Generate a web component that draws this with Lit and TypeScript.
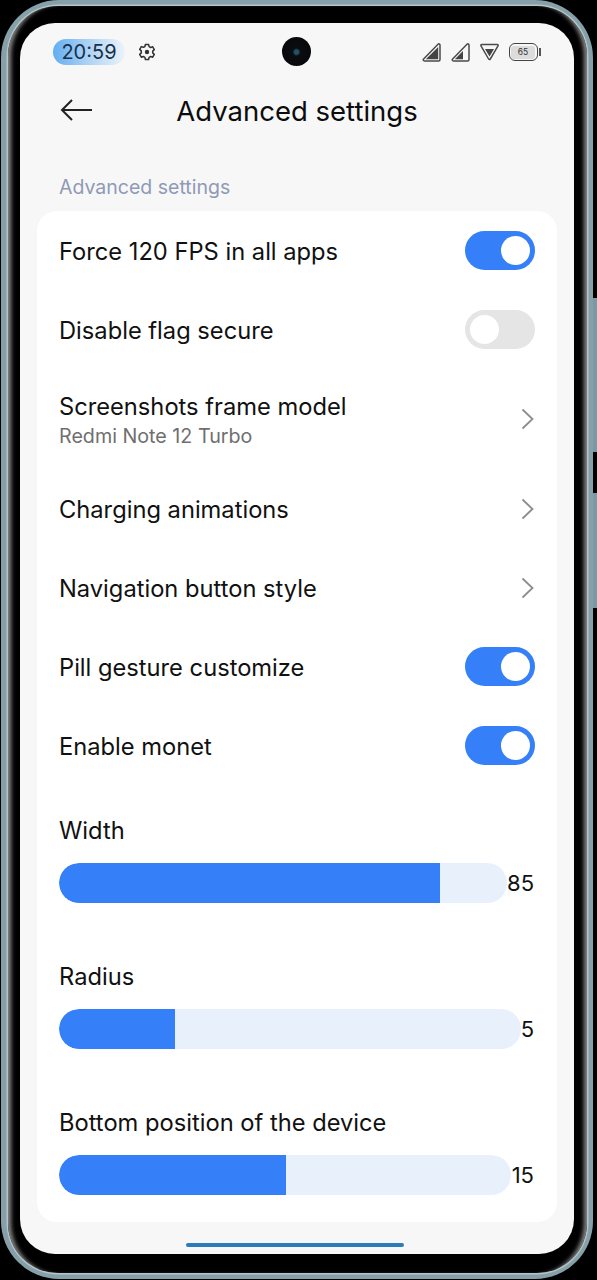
import { LitElement, html, css, svg } from "lit";
import { customElement } from "lit/decorators.js";

const chevron = html`<svg class="chev" width="13" height="22" viewBox="0 0 13 22"><path d="M1.500 1.500L11.500 11L1.500 20.500" fill="none" stroke="#8d8d8d" stroke-width="1.800"/></svg>`;

const signal = (fillPath: string) => svg`
  <path d="M18 2V16.500a1.500 1.500 0 0 1-1.500 1.500H2.500c-1.200 0-1.700-1.200-.9-2L16 1.200c.8-.7 2-.2 2 .8z" fill="none" stroke="#4a4a4a" stroke-width="1.500"/>
  <path d="${fillPath}" fill="#444"/>`;

@customElement("app-root")
export class AppRoot extends LitElement {
  static styles = css`
    :host {
      display: block;
      width: 597px;
      height: 1280px;
      background: #000;
      font-family: Inter, Roboto, "Noto Sans", sans-serif;
      color: #111;
      overflow: hidden;
      position: relative;
    }
    .frame {
      box-sizing: border-box;
      width: 592px;
      height: 1279px;
      margin-left: 1px;
      padding: 6px 6px 6px 7px;
      border-radius: 58px;
      background: #86a0a9;
    }
    .bezel {
      box-sizing: border-box;
      height: 100%;
      padding: 17px 13px 19px 12px;
      border-radius: 50px;
      background: #000;
      box-shadow: 0 0 0 1.500px #b5c4c8, inset 6px 0 4px -3px #8a8a8a, inset -6px 0 4px -3px #8a8a8a;
    }
    .screen {
      height: 1231px;
      border-radius: 35px;
      background: #f7f7f7;
      position: relative;
      overflow: hidden;
    }
    .status {
      height: 58px;
      display: flex;
      align-items: center;
      padding: 0 33px 0 33px;
      box-sizing: border-box;
    }
    .time {
      width: 72px;
      height: 26px;
      border-radius: 13px;
      background: linear-gradient(90deg, #62aef3 0%, #a9d0f3 45%, #edf3f8 100%);
      color: #16324d;
      font-size: 20px;
      line-height: 26px;
      text-align: center;
    }
    .gear {
      margin-left: 13px;
    }
    .camera {
      position: absolute;
      left: 262px;
      top: 14px;
      width: 29px;
      height: 29px;
      border-radius: 50%;
      background: radial-gradient(circle at 50% 52%, #24506a 0 2px, #0a0d10 4px, #050507 100%);
    }
    .icons {
      margin-left: auto;
      display: flex;
      align-items: center;
      gap: 10px;
    }
    .battery {
      display: flex;
      align-items: center;
      gap: 1.500px;
    }
    .cell {
      box-sizing: border-box;
      width: 29px;
      height: 18px;
      border: 1.400px solid #444;
      border-radius: 6px;
      padding: 1.500px;
      display: flex;
    }
    .cell span {
      flex: 1;
      border-radius: 3px;
      background: #dcdcdc;
      font-size: 8.500px;
      line-height: 12px;
      text-align: center;
      color: #333;
    }
    .cap {
      width: 2px;
      height: 8px;
      background: #555;
    }
    .header {
      height: 60px;
      display: flex;
      align-items: center;
      justify-content: center;
      position: relative;
    }
    .back {
      position: absolute;
      left: 40px;
      top: 18px;
    }
    .title {
      font-size: 27.500px;
      font-weight: 400;
      color: #0c0c0c;
    }
    .section {
      margin: 30px 0 0 39px;
      height: 40px;
      padding-top: 1px;
      box-sizing: border-box;
      font-size: 19.500px;
      line-height: 30px;
      color: #8f9ab6;
    }
    .card {
      margin: 0 17px;
      height: 1011px;
      border-radius: 20px;
      background: #fff;
      padding: 1px 22px 0;
      box-sizing: border-box;
    }
    .row {
      height: 79px;
      display: flex;
      align-items: center;
      justify-content: space-between;
    }
    .row.tall {
      height: 100px;
    }
    .label {
      font-size: 23.700px;
      line-height: 30px;
      color: #111;
    }
    .sub {
      font-size: 19.700px;
      line-height: 24px;
      color: #6f6f6f;
      margin-top: 2px;
    }
    .chev {
      margin: 0 1px 2px 0;
    }
    .sw {
      box-sizing: border-box;
      width: 70px;
      height: 39px;
      margin-bottom: 2px;
      border-radius: 20px;
      padding: 5px;
      display: flex;
      background: #e5e5e5;
    }
    .sw.on {
      background: #3580f8;
      justify-content: flex-end;
    }
    .knob {
      width: 29px;
      height: 29px;
      border-radius: 50%;
      background: #fff;
    }
    .slider {
      height: 146px;
    }
    .slider .label {
      padding-top: 30px;
      height: 30px;
    }
    .srow {
      margin-top: 17px;
      display: flex;
      align-items: center;
    }
    .track {
      height: 40px;
      border-radius: 20px;
      background: #e8f0fb;
      overflow: hidden;
    }
    .fill {
      height: 100%;
      background: #3580f8;
      border-radius: 20px 0 0 20px;
    }
    .val {
      font-size: 22px;
      flex: 1;
      text-align: right;
      margin-right: 1px;
      color: #111;
    }
    .pill {
      width: 218px;
      height: 4px;
      margin: 21px 0 0 166px;
      border-radius: 2px;
      background: #2c7cbb;
    }
    .btn {
      position: absolute;
      right: 0;
      width: 4px;
      background: #7d98a2;
    }
    .b1 {
      top: 298px;
      height: 154px;
    }
    .b2 {
      top: 493px;
      height: 115px;
    }
  `;

  private toggle(on: boolean) {
    return html`<div class="sw ${on ? "on" : ""}"><div class="knob"></div></div>`;
  }

  private slider(label: string, trackW: number, fillW: number, val: number) {
    return html`<div class="slider">
      <div class="label">${label}</div>
      <div class="srow">
        <div class="track" style="width:${trackW}px"><div class="fill" style="width:${fillW}px"></div></div>
        <div class="val">${val}</div>
      </div>
    </div>`;
  }

  render() {
    return html`
      <div class="frame">
        <div class="bezel">
          <div class="screen">
            <div class="camera"></div>
            <div class="status">
              <div class="time">20:59</div>
              <svg class="gear" width="18" height="18" viewBox="0 0 18 18">
                <path d="M7.400 1.500h3.200l.5 2.200 1.500.8 2.100-.7 1.600 2.800-1.600 1.500v1.800l1.600 1.500-1.600 2.800-2.100-.7-1.500.8-.5 2.200H7.400l-.5-2.200-1.500-.8-2.100.7-1.600-2.800 1.600-1.500V7.900L1.700 6.400l1.600-2.800 2.100.7 1.500-.8z" fill="none" stroke="#333" stroke-width="1.500" stroke-linejoin="round"/>
                <circle cx="9" cy="9" r="2.200" fill="#333"/>
              </svg>
              <div class="icons">
                <svg width="19" height="19" viewBox="0 0 19 19">${signal("M16.200 4V16.200H3.800z")}</svg>
                <svg width="19" height="19" viewBox="0 0 19 19">${signal("M12 8V16.200H3.800z")}</svg>
                <svg width="19" height="19" viewBox="0 0 19 19">
                  <path d="M1.800 1.500h15.400c.8 0 1.200.8.8 1.400L10.300 16c-.4.700-1.300.7-1.700 0L1 2.900c-.4-.6 0-1.400.8-1.400z" fill="none" stroke="#4a4a4a" stroke-width="1.500"/>
                  <path d="M5 6h9l-4.500 7.500z" fill="#444"/>
                </svg>
                <div class="battery"><div class="cell"><span>65</span></div><div class="cap"></div></div>
              </div>
            </div>
            <div class="header">
              <svg class="back" width="33" height="22" viewBox="0 0 33 22">
                <path d="M32 11H2M12 1L2 11l10 10" fill="none" stroke="#222" stroke-width="2"/>
              </svg>
              <div class="title">Advanced settings</div>
            </div>
            <div class="section">Advanced settings</div>
            <div class="card">
              <div class="row"><div class="label">Force 120 FPS in all apps</div>${this.toggle(true)}</div>
              <div class="row"><div class="label">Disable flag secure</div>${this.toggle(false)}</div>
              <div class="row tall">
                <div><div class="label">Screenshots frame model</div><div class="sub">Redmi Note 12 Turbo</div></div>
                ${chevron}
              </div>
              <div class="row"><div class="label">Charging animations</div>${chevron}</div>
              <div class="row"><div class="label">Navigation button style</div>${chevron}</div>
              <div class="row"><div class="label">Pill gesture customize</div>${this.toggle(true)}</div>
              <div class="row"><div class="label">Enable monet</div>${this.toggle(true)}</div>
              ${this.slider("Width", 448, 381, 85)}
              ${this.slider("Radius", 462, 116, 5)}
              ${this.slider("Bottom position of the device", 452, 227, 15)}
            </div>
            <div class="pill"></div>
          </div>
        </div>
      </div>
      <div class="btn b1"></div>
      <div class="btn b2"></div>
    `;
  }
}
